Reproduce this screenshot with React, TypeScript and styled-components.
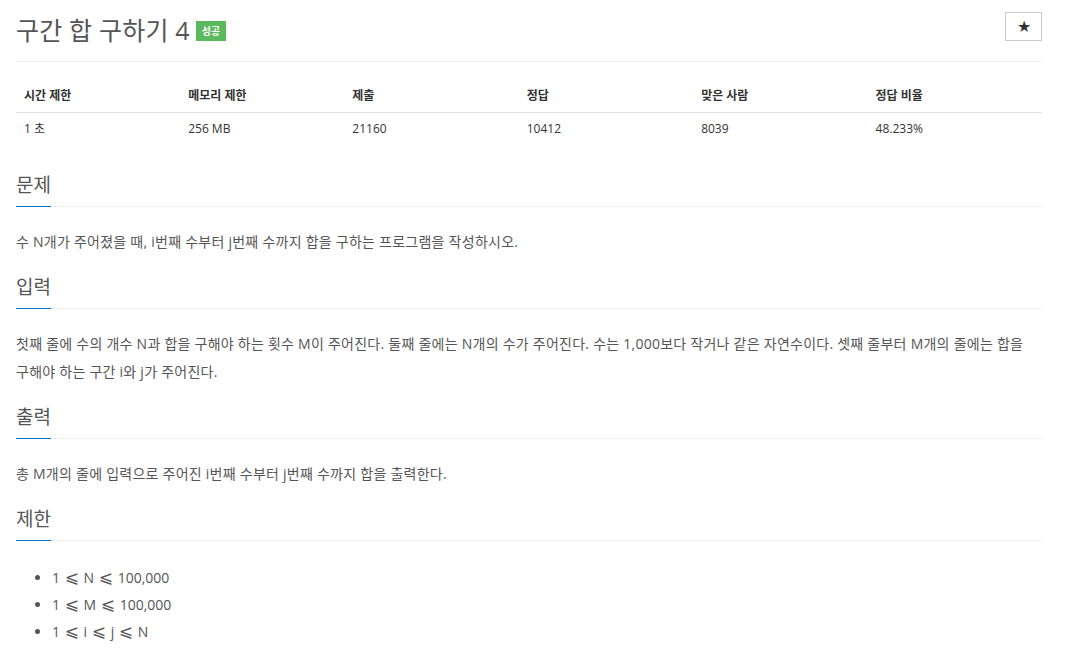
import React from 'react';
import styled, { createGlobalStyle } from 'styled-components';

const GlobalStyle = createGlobalStyle`
  body {
    margin: 0;
    background: #fff;
    font-family: "Open Sans", "Noto Sans CJK KR", sans-serif;
    color: #555;
  }
`;

const Page = styled.div`
  padding: 0 30px 0 16px;
`;

const Header = styled.div`
  display: flex;
  align-items: center;
  justify-content: space-between;
  height: 62px;
  border-bottom: 1px solid #eee;
  box-sizing: border-box;
  padding-bottom: 4px;
`;

const Title = styled.h1`
  margin: 0;
  display: flex;
  align-items: center;
  gap: 6px;
  font-size: 25px;
  font-weight: 400;
  color: #555;
  letter-spacing: 0.2px;
`;

const Badge = styled.span`
  display: inline-block;
  height: 20px;
  line-height: 20px;
  padding: 0 6px;
  background: #5cb85c;
  color: #fff;
  font-size: 10px;
  font-weight: 700;
  letter-spacing: 0;
  margin-top: 4px;
`;

const StarButton = styled.button`
  width: 37px;
  height: 29px;
  border: 1px solid #ccc;
  background: #fff;
  color: #333;
  font-size: 16px;
  line-height: 1;
  padding: 0;
  margin-bottom: 4px;
  cursor: pointer;
`;

const Table = styled.table`
  width: 100%;
  border-collapse: collapse;
  margin-top: 18px;
  margin-bottom: 28px;
  font-size: 12px;
`;

const Th = styled.th<{ $w: number }>`
  width: ${(p) => p.$w}%;
  text-align: left;
  padding: 8px;
  line-height: 16px;
  font-weight: 700;
  color: #333;
  border-bottom: 1px solid #ddd;
`;

const Td = styled.td`
  padding: 8px;
  line-height: 16px;
  color: #333;
`;

const Section = styled.section`
  margin-bottom: 19px;
`;

const Headline = styled.div<{ $gap?: number }>`
  border-bottom: 1px solid #eee;
  margin-bottom: ${(p) => (p.$gap ?? 21)}px;
`;

const H2 = styled.h2`
  display: inline-block;
  margin: 0 0 -1px;
  font-size: 19px;
  font-weight: 400;
  line-height: 24px;
  padding-bottom: 9px;
  color: #555;
  border-bottom: 1px solid #0076c0;
`;

const Text = styled.p`
  margin: 0;
  font-size: 14px;
  line-height: 28px;
  letter-spacing: 0.25px;
  word-break: keep-all;
  color: #555;
`;

const List = styled.ul`
  margin: 0;
  padding-left: 36px;
  font-size: 14px;
  line-height: 27px;
  color: #555;
`;

const Le = styled.span`
  font-family: "DejaVu Sans", sans-serif;
  font-size: 17px;
  line-height: 1;
  margin: 0 1px;
`;

const stats = [
  { label: '시간 제한', value: '1 초', w: 16 },
  { label: '메모리 제한', value: '256 MB', w: 16 },
  { label: '제출', value: '21160', w: 17 },
  { label: '정답', value: '10412', w: 17 },
  { label: '맞은 사람', value: '8039', w: 17 },
  { label: '정답 비율', value: '48.233%', w: 17 },
];

const limits = [
  ['1', 'N', '100,000'],
  ['1', 'M', '100,000'],
  ['1', 'i', 'j', 'N'],
];

const Heading = ({ children, gap }: { children: React.ReactNode; gap?: number }) => (
  <Headline $gap={gap}>
    <H2>{children}</H2>
  </Headline>
);

const App = () => {
  return (
    <Page>
      <GlobalStyle />
      <Header>
        <Title>
          구간 합 구하기 4 <Badge>성공</Badge>
        </Title>
        <StarButton>★</StarButton>
      </Header>

      <Table>
        <thead>
          <tr>
            {stats.map((s) => (
              <Th key={s.label} $w={s.w}>{s.label}</Th>
            ))}
          </tr>
        </thead>
        <tbody>
          <tr>
            {stats.map((s) => (
              <Td key={s.label}>{s.value}</Td>
            ))}
          </tr>
        </tbody>
      </Table>

      <Section>
        <Heading>문제</Heading>
        <Text>수 N개가 주어졌을 때, i번째 수부터 j번째 수까지 합을 구하는 프로그램을 작성하시오.</Text>
      </Section>

      <Section>
        <Heading>입력</Heading>
        <Text>
          첫째 줄에 수의 개수 N과 합을 구해야 하는 횟수 M이 주어진다. 둘째 줄에는 N개의 수가 주어진다. 수는 1,000보다 작거나 같은 자연수이다. 셋째 줄부터 M개의 줄에는 합을 구해야 하는 구간 i와 j가 주어진다.
        </Text>
      </Section>

      <Section>
        <Heading>출력</Heading>
        <Text>총 M개의 줄에 입력으로 주어진 i번째 수부터 j번째 수까지 합을 출력한다.</Text>
      </Section>

      <Section>
        <Heading gap={23}>제한</Heading>
        <List>
          {limits.map((parts, i) => (
            <li key={i}>
              {parts.map((p, k) => (
                <React.Fragment key={k}>
                  {k > 0 && <> <Le>⩽</Le> </>}
                  {p}
                </React.Fragment>
              ))}
            </li>
          ))}
        </List>
      </Section>
    </Page>
  );
};

export default App;
